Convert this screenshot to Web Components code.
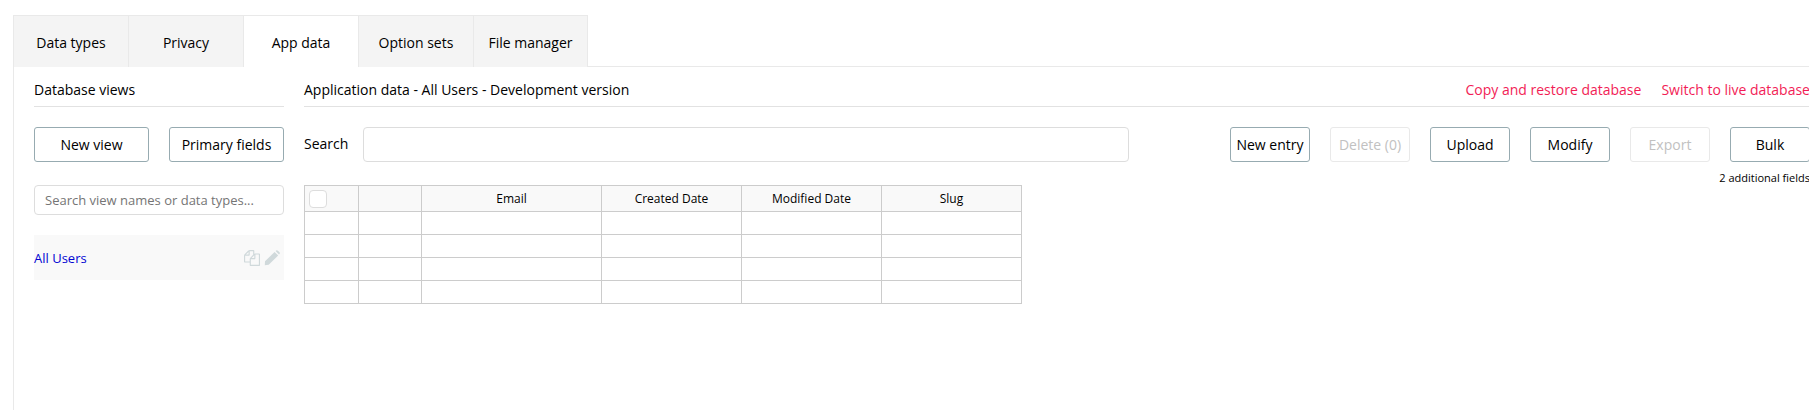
<!DOCTYPE html>
<html lang="en">
<head>
<meta charset="utf-8">
<title>App data</title>
<style>
html,body{margin:0;height:100%;overflow:hidden;background:#fff}
body{font:15px/20px "Open Sans","Noto Sans",sans-serif;color:#000}
</style>
</head>
<body>
<data-page></data-page>
<script>
const define=(name,html,setup)=>customElements.define(name,class extends HTMLElement{
  constructor(){
    super();
    const t=document.createElement('template');
    t.innerHTML=html;
    this.attachShadow({mode:'open'}).append(t.content.cloneNode(true));
  }
  connectedCallback(){if(setup)setup(this,this.shadowRoot)}
});

define('tab-item',`<style>
:host{box-sizing:border-box;width:115px;height:52px;display:flex;align-items:center;justify-content:center;background:#f4f4f4;border-top:1px solid #e9e9e9;border-left:1px solid #e9e9e9;padding-top:3px;font-size:14px;white-space:nowrap}
:host([selected]){background:#fff}
:host(:last-of-type){border-right:1px solid #e9e9e9}
</style><slot></slot>`);

define('tab-bar',`<style>
:host{display:flex;height:52px}
.rest{flex:1;box-sizing:border-box;border-bottom:1px solid #e9e9e9}
</style><slot></slot><div class="rest"></div>`);

define('push-button',`<style>
:host{box-sizing:border-box;display:flex;align-items:center;justify-content:center;width:var(--button-width,80px);height:35px;border:1px solid #97abb1;border-radius:3px;background:#fff;font-size:14px;white-space:nowrap;flex:none}
:host([disabled]){border-color:#e9e9e9;color:#c1c1c1}
</style><slot></slot>`);

define('section-title',`<style>
:host{box-sizing:border-box;display:flex;height:40px;padding-top:13px;border-bottom:1px solid #e2e2e2;font-size:14px;white-space:nowrap}
.links{margin-left:auto;display:flex;gap:20px;color:#f21d56}
</style><slot></slot><div class="links"><slot name="link"></slot></div>`);

define('text-field',`<style>
:host{box-sizing:border-box;display:flex;align-items:center;height:35px;border:1px solid #ddd;border-radius:4px;background:#fff;color:#757575;font-size:13px;padding:0 10px;white-space:nowrap}
</style><slot></slot>`);

define('view-row',`<style>
:host{box-sizing:border-box;display:flex;align-items:center;height:45px;padding-top:1px;background:#f9f9f9;font-size:13px;color:#0205d3;margin-top:20px}
svg{display:block;fill:#d0d9db;margin-right:4px}
.icons{display:flex;align-items:center;margin-left:auto}
</style><span><slot></slot></span>
<div class="icons">
<svg width="16" height="16" viewBox="0 0 1792 1792"><path d="M1696 384q40 0 68 28t28 68v1216q0 40-28 68t-68 28h-960q-40 0-68-28t-28-68v-288h-544q-40 0-68-28t-28-68v-672q0-40 20-88t48-76l408-408q28-28 76-48t88-20h416q40 0 68 28t28 68v328q68-40 128-40h416zm-544 213l-299 299h299v-299zm-640-384l-299 299h299v-299zm196 647l316-316v-416h-384v416q0 40-28 68t-68 28h-416v640h512v-256q0-40 20-88t48-76zm956 804v-1152h-384v416q0 40-28 68t-68 28h-416v640h896z"/></svg>
<svg width="16" height="16" viewBox="0 0 16 16"><path d="M1 11.2 10.6 2l3.6 3.5L4.7 14.8l-3.9.5zM11.6 1.1l.7-.6q.8-.5 1.6.2l1.6 1.6q.7.8.1 1.5l-.6.7z"/></svg>
</div>`);

define('check-box',`<style>
:host{box-sizing:border-box;display:block;width:18px;height:18px;border:1px solid #ddd;border-radius:4px;background:#fff}
</style>`);

define('data-table',`<style>
:host{display:grid;box-sizing:border-box;grid-template-columns:53px 62px 179px 139px 139px 139px;grid-template-rows:25px repeat(4,22px);gap:1px;width:718px;padding:1px;background:#ccc;font-size:12px}
div{background:#fff;display:flex;align-items:center;justify-content:center}
.head{background:#f9f9f9}
.pick{justify-content:flex-start;padding-left:4px}
</style>`,(host,root)=>{
  host.getAttribute('columns').split('|').forEach((label,i)=>{
    const cell=document.createElement('div');
    cell.className=i?'head':'head pick';
    i?cell.textContent=label:cell.append(document.createElement('check-box'));
    root.append(cell);
  });
  for(let i=0;i<24;i++)root.append(document.createElement('div'));
});

define('side-panel',`<style>
:host{display:block;width:250px}
.buttons{display:flex;justify-content:space-between;margin:20px 0 23px;--button-width:115px}
text-field{height:30px}
</style>
<section-title>Database views</section-title>
<div class="buttons"><push-button>New view</push-button><push-button>Primary fields</push-button></div>
<text-field>Search view names or data types...</text-field>
<view-row>All Users</view-row>`);

define('data-panel',`<style>
:host{display:block;width:1506px}
.tools{display:flex;margin-top:20px}
label{width:59px;font-size:14px;padding-top:7px;box-sizing:border-box}
text-field{width:766px}
.actions{margin-left:auto;display:flex;gap:20px}
.lower{display:flex;justify-content:space-between;align-items:flex-start}
data-table{margin-top:23px}
.note{font-size:11px;line-height:21px;margin-top:5px;white-space:nowrap}
</style>
<section-title>Application data - All Users - Development version<span slot="link">Copy and restore database</span><span slot="link">Switch to live database</span></section-title>
<div class="tools"><label>Search</label><text-field></text-field>
<div class="actions"><push-button>New entry</push-button><push-button disabled>Delete (0)</push-button><push-button>Upload</push-button><push-button>Modify</push-button><push-button disabled>Export</push-button><push-button>Bulk</push-button></div></div>
<div class="lower"><data-table columns="||Email|Created Date|Modified Date|Slug"></data-table><span class="note">2 additional fields</span></div>`);

define('data-page',`<style>
:host{display:flex;flex-direction:column;height:100%;box-sizing:border-box;padding:15px 0 0 13px}
.body{flex:1;display:flex;gap:20px;padding-left:20px;border-left:1px solid #e9e9e9}
side-panel,data-panel{flex:none}
</style>
<tab-bar><tab-item>Data types</tab-item><tab-item>Privacy</tab-item><tab-item selected>App data</tab-item><tab-item>Option sets</tab-item><tab-item>File manager</tab-item></tab-bar>
<div class="body"><side-panel></side-panel><data-panel></data-panel></div>`);
</script>
</body>
</html>
